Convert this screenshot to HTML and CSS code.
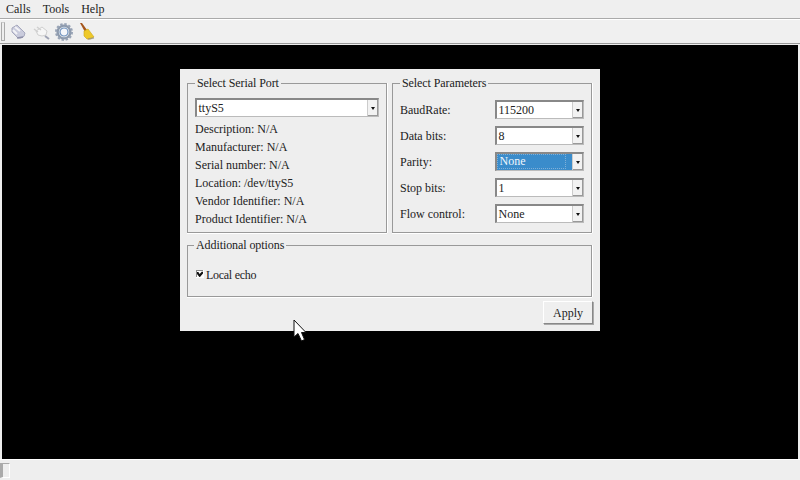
FILE: index.html
```
<!DOCTYPE html>
<html lang="en">
<head>
<meta charset="utf-8">
<title>Terminal</title>
<link rel="stylesheet" href="styles.css">
</head>
<body>
<div class="app">
  <nav class="menubar"><span>Calls</span><span>Tools</span><span>Help</span></nav>
  <div class="toolbar">
    <span class="grip"></span>
    <svg class="tool" viewBox="0 0 20 20" width="20" height="20"><path d="M4 6 L9 3 L17 11 Q17 15 13 16 L10 16 L4 10Z" fill="#c9cbdc" stroke="#a6a8bd"/><path d="M7 5 L12 9 M5 8 L9 12" stroke="#f2f2f6" stroke-width="2"/><path d="M9 16 L15 15" stroke="#8d8fa8" stroke-width="1.5"/></svg>
    <svg class="tool" viewBox="0 0 20 20" width="20" height="20"><path d="M5 9 L11 5 L16 9 L15 13 L11 14 L7 13Z" fill="#f6f6f6" stroke="#cfcfcf"/><path d="M3 7 L7 10 M6 5 L10 8" stroke="#d0d0d0" stroke-width="1.5"/><path d="M14 14 L18 17" stroke="#9fa3b4" stroke-width="2"/></svg>
    <svg class="tool" viewBox="0 0 20 20" width="20" height="20"><circle cx="10" cy="10" r="6.4" fill="none" stroke="#8d9aad" stroke-width="2.4"/><circle cx="10" cy="10" r="8" fill="none" stroke="#98a3b5" stroke-width="2" stroke-dasharray="2.4 1.8"/><circle cx="10" cy="10" r="4" fill="#f4f6fa" stroke="#6b8fbd" stroke-width="1.2"/></svg>
    <svg class="tool" viewBox="0 0 20 20" width="20" height="20"><path d="M3 1 L5 1 L10 8 L8 10Z" fill="#a5561c"/><path d="M7 9 L11 7 L17 15 Q13 18 10 17 L7 14Z" fill="#eec92a" stroke="#c9a516" stroke-width=".6"/><path d="M11 17 L17 16" stroke="#8a8a8a" stroke-width="1.5" opacity=".6"/></svg>
  </div>
  <main class="console">
    <section class="dialog">
      <div class="top-row">
        <fieldset class="group">
          <legend>Select Serial Port</legend>
          <div class="combo wide"><span class="combo-text">ttyS5</span><span class="combo-btn"></span></div>
          <p class="info">Description: N/A</p>
          <p class="info">Manufacturer: N/A</p>
          <p class="info">Serial number: N/A</p>
          <p class="info">Location: /dev/ttyS5</p>
          <p class="info">Vendor Identifier: N/A</p>
          <p class="info">Product Identifier: N/A</p>
        </fieldset>
        <fieldset class="group">
          <legend>Select Parameters</legend>
          <div class="params">
            <label>BaudRate:</label><div class="combo"><span class="combo-text">115200</span><span class="combo-btn"></span></div>
            <label>Data bits:</label><div class="combo"><span class="combo-text">8</span><span class="combo-btn"></span></div>
            <label>Parity:</label><div class="combo focused"><span class="combo-text"><span class="focus-ring">None</span></span><span class="combo-btn"></span></div>
            <label>Stop bits:</label><div class="combo"><span class="combo-text">1</span><span class="combo-btn"></span></div>
            <label>Flow control:</label><div class="combo"><span class="combo-text">None</span><span class="combo-btn"></span></div>
          </div>
        </fieldset>
      </div>
      <fieldset class="group options">
        <legend>Additional options</legend>
        <div class="check">
          <svg class="box" viewBox="0 0 8 8" width="8" height="8"><path d="M0 0H8V8H0Z" fill="#fff"/><path d="M0 0H7V1H1V7H0Z" fill="#888"/><path d="M1 2 L2.4 2 L3.6 4 L6 1.4 L7 2 V3.6 L4 7 H3.4 L1 4Z" fill="#111"/></svg>
          <span class="check-label">Local echo</span>
        </div>
      </fieldset>
      <div class="actions"><button class="apply">Apply</button></div>
    </section>
  </main>
  <footer class="statusbar"><span class="status-cell"></span></footer>
  <svg class="cursor" viewBox="0 0 14 24" width="14" height="24"><path d="M1 1 L1 18 L5 14.5 L8.5 22 L11.5 20.5 L8.5 13.5 L13 13.5Z" fill="#fff" stroke="#111" stroke-width="1"/></svg>
</div>
</body>
</html>
```
FILE: styles.css
```
* { box-sizing: border-box; }
html, body { margin: 0; height: 100%; }
body { font: 12px/14px "Liberation Serif", serif; color: #222; background: #eee; }
.app { position: relative; width: 800px; height: 480px; display: flex; flex-direction: column; overflow: hidden; }
.menubar { height: 19px; display: flex; gap: 12px; padding: 2px 0 0 6px; background: #efefef; border-bottom: 1px solid #aaa; font-size: 12px; }
.toolbar { height: 25px; margin-bottom: 1px; display: flex; align-items: center; gap: 3px; padding-left: 1px; background: #f0f0f0; border-top: 1px solid #fff; border-bottom: 1px solid #999; }
.grip { width: 4px; height: 19px; border: 1px solid #aaa; border-top-color: #ccc; background: #eee; }
.console { height: 414px; margin: 0 2px; background: #000; padding: 24px 20px 0 0; display: flex; justify-content: center; align-items: flex-start; }
.dialog { width: 420px; height: 262px; background: #eee; padding: 7px 8px 0 7px; display: flex; flex-direction: column; }
.top-row { display: flex; gap: 5px; }
.group { margin: 0; min-width: 0; border: 1px solid #999; box-shadow: 0 1px 0 #fff, 1px 0 0 #fff; padding: 0; }
.top-row .group { width: 200px; height: 157px; padding: 8px 7px 0; }
.group legend { margin-left: 0; padding: 0 2px; font-size: 12px; line-height: 14px; letter-spacing: -.08px; }
.options legend { margin-left: 6px; }
.combo { height: 19px; width: 89px; display: flex; background: #fff; border: 1px solid #bbb; border-top: 2px solid #888; border-left: 2px solid #888; }
.combo.wide { width: 184px; margin-bottom: 3px; }
.combo-text { flex: 1; padding-left: 1.5px; line-height: 16px; min-width: 0; }
.combo-btn { width: 11px; position: relative; background: #f2f2f2; border-left: 1px solid #ccc; box-shadow: inset -1px -1px 0 #999; }
.combo-btn::after { content: ""; position: absolute; left: 3px; top: 7px; border: 2px solid transparent; border-top: 3px solid #111; border-bottom: 0; }
.focused { background: #3a8ccb; color: #f0f6fc; }
.focus-ring { display: block; height: 15px; margin: 0 6px 0 -1.5px; padding-left: 1.5px; border: 1px dotted #7fb0d8; line-height: 13px; }
.info { margin: 0; height: 18px; line-height: 18px; }
.params { display: grid; grid-template-columns: 95px 89px; grid-auto-rows: 20px; row-gap: 6px; align-items: center; padding-top: 2px; }
.params .combo { align-self: start; }
.options { height: 59px; margin-top: 5px; width: 405px; }
.check { display: flex; align-items: center; gap: 2px; padding: 15px 0 0 8px; height: 30px; }
.check-label { letter-spacing: -.28px; }
.box { flex: none; margin-top: -2px; }
.actions { display: flex; justify-content: flex-end; margin-top: 4px; margin-right: -1px; }
.apply { width: 50px; height: 23px; padding: 0; font: inherit; color: #222; background: #efefef; border: 1px solid #888; border-color: #fff #888 #888 #fff; box-shadow: 1px 1px 0 #aaa; }
.statusbar { height: 21px; padding-top: 3px; background: #eee; border-top: 1px solid #fff; }
.status-cell { display: block; width: 10px; height: 15px; border: 1px solid #fff; border-left: 3px solid #aaa; border-top-color: #aaa; }
.cursor { position: absolute; left: 293px; top: 319px; }
```
